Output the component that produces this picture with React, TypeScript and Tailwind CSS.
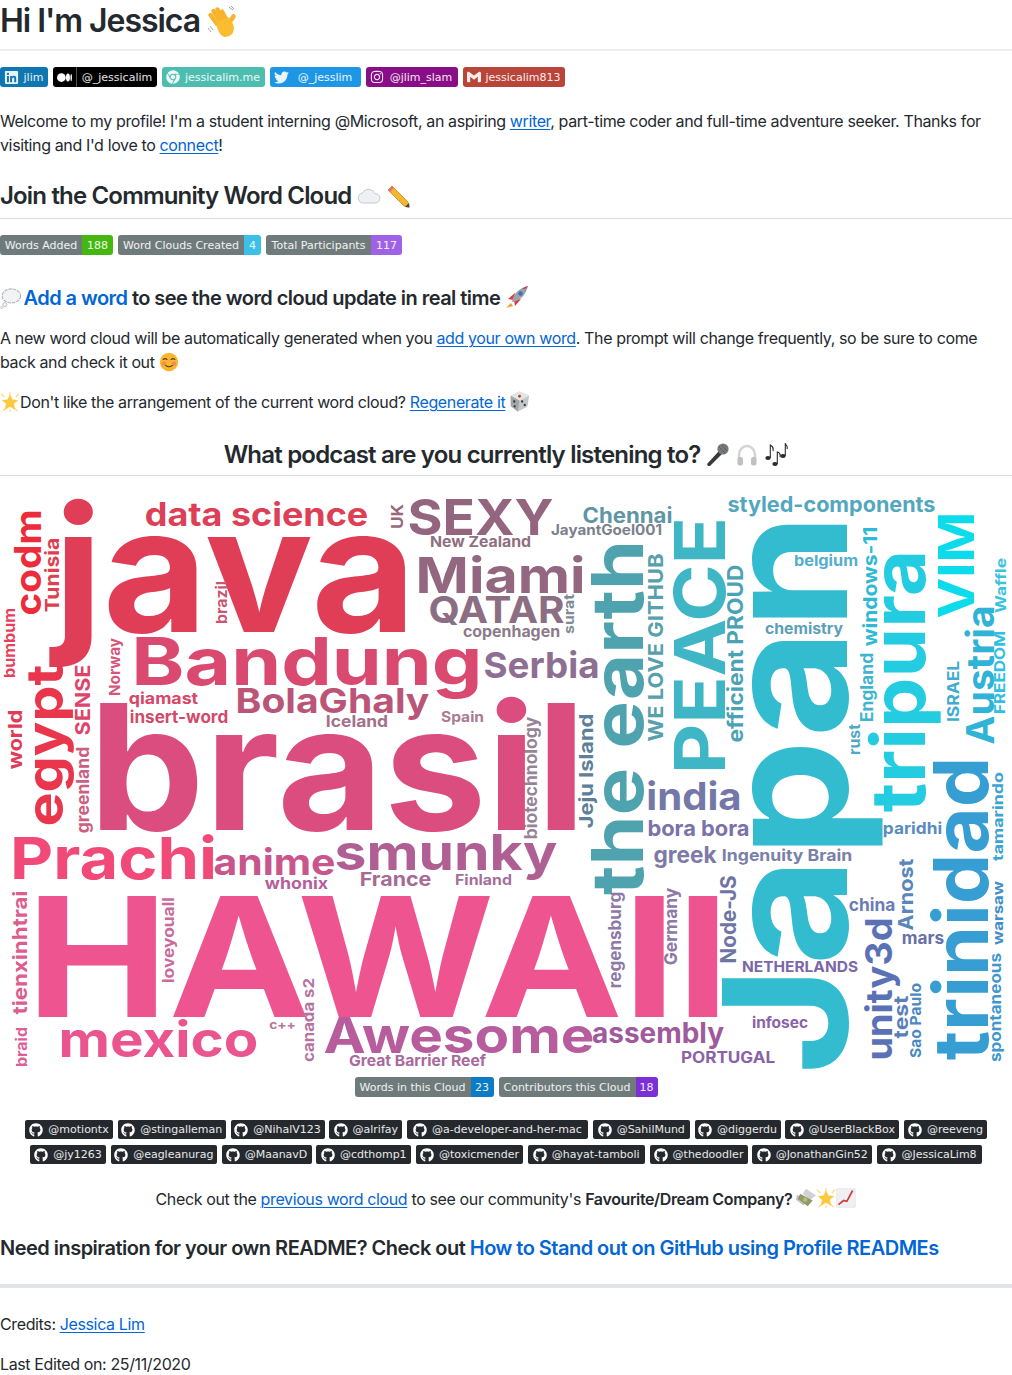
import type { ReactNode } from 'react';
import { FaChrome, FaGithub, FaInstagram, FaLinkedin, FaTwitter } from 'react-icons/fa';
import { SiGmail } from 'react-icons/si';

type Word = [string, number, number, number, number, string, boolean?];

// text, x, y (baseline), font size, length, colour, vertical
const words: Word[] = [
  ['java', 66, 632, 174, 338, '#e03d57'],
  ['data science', 147, 526, 32, 219, '#dd3f57'],
  ['UK', 403, 528, 15.5, 23, '#9a6878', true],
  ['SEXY', 411, 535, 50, 139, '#93657e'],
  ['New Zealand', 431, 547, 15, 99, '#8f6f80'],
  ['Miami', 419, 593, 50, 163, '#93677f'],
  ['QATAR', 431, 623, 37, 131, '#8c6e83'],
  ['copenhagen', 464, 637, 15.5, 95, '#8c7a8a'],
  ['surat', 574, 633, 13.5, 38, '#7e8b96', true],
  ['Chennai', 584, 523, 21, 87, '#5f96a5'],
  ['JayantGoel001', 552, 535, 14, 109, '#7b7f8d'],
  ['styled-components', 729, 512, 21, 205, '#52a7bf'],
  ['VIM', 974, 615, 50, 100, '#0cdbec', true],
  ['PEACE', 725, 769, 70, 247, '#3fb6c5', true],
  ['WE LOVE GITHUB', 663, 740, 20.5, 185, '#58a0ac', true],
  ['efficient PROUD', 743, 741, 21, 175, '#4aa3b5', true],
  ['the earth', 643, 890, 71, 345, '#4ea3ae', true],
  ['Japan', 847, 1063, 172, 538, '#33bccf', true],
  ['belgium', 795, 566, 15, 62, '#55aecc'],
  ['chemistry', 766, 634, 15, 76, '#5b9fb8'],
  ['windows-11', 877, 645, 19, 117, '#30b9d6', true],
  ['tripura', 925, 807, 75, 252, '#23cce0', true],
  ['Austria', 994, 742, 38, 134, '#2fb3d6', true],
  ['FREEDOM', 1005, 713, 15, 81, '#33c0e0', true],
  ['Waffle', 1006, 612, 14.5, 53, '#3cc3dc', true],
  ['ISRAEL', 959, 721, 16, 59, '#40acd0', true],
  ['England', 873, 721, 17, 67, '#3eb5cf', true],
  ['rust', 860, 754, 15, 29, '#4fa9c6', true],
  ['Jeju Island', 593, 827, 19, 112, '#5e7f9a', true],
  ['biotechnology', 537, 838, 17, 120, '#968396', true],
  ['Serbia', 486, 678, 36, 111, '#8e6f93'],
  ['Bandung', 136, 685, 66, 342, '#da4a70'],
  ['brasil', 101, 830, 174, 473, '#db4d7e'],
  ['BolaGhaly', 238, 713, 34, 189, '#ba5578'],
  ['Iceland', 327, 727, 16, 60, '#a3708a'],
  ['Spain', 442, 722, 14.5, 41, '#ab7a92'],
  ['qiamast', 130, 704, 16, 67, '#d5486a'],
  ['insert-word', 131, 723, 17, 96, '#d24a6a'],
  ['brazil', 227, 623, 15, 41, '#cc5470', true],
  ['codm', 41, 613, 37, 101, '#ec2c3a', true],
  ['Tunisia', 59, 611, 19, 72, '#df4050', true],
  ['bumbum', 15, 677, 15, 68, '#e8405a', true],
  ['Norway', 120, 695, 15, 56, '#d6557a', true],
  ['SENSE', 90, 734, 20, 68, '#de4369', true],
  ['egypt', 63, 823, 51, 155, '#e9364c', true],
  ['world', 22, 768, 19, 57, '#e03c58', true],
  ['greenland', 89, 832, 17, 84, '#cc5e80', true],
  ['Prachi', 14, 879, 58, 199, '#f24a78'],
  ['anime', 216, 875, 36, 117, '#c9558d'],
  ['smunky', 338, 870, 49, 216, '#b05f94'],
  ['whonix', 266, 889, 16, 61, '#b5609a'],
  ['France', 361, 886, 19, 69, '#a66a95'],
  ['Finland', 456, 885, 14.5, 55, '#a56f9c'],
  ['HAWAII', 38, 1017, 166, 680, '#ee5590'],
  ['tienxinhtrai', 27, 1013, 20, 121, '#dd5d8e', true],
  ['loveyouall', 174, 982, 15.5, 84, '#c96b9b', true],
  ['braid', 27, 1066, 15, 38, '#de6097', true],
  ['mexico', 62, 1057, 49, 193, '#ea5590'],
  ['c++', 270, 1029, 12, 25, '#b675a0'],
  ['canada s2', 314, 1061, 15, 82, '#b573a2', true],
  ['Awesome', 327, 1053, 50, 264, '#b75c9c'],
  ['Great Barrier Reef', 350, 1066, 15, 135, '#a96a9d'],
  ['assembly', 594, 1043, 28, 128, '#a05a9c'],
  ['PORTUGAL', 682, 1063, 15.5, 92, '#8a62a8'],
  ['infosec', 753, 1028, 15, 54, '#8a62a8'],
  ['NETHERLANDS', 743, 972, 15, 114, '#7a68a8'],
  ['Node-JS', 736, 962, 21, 85, '#6e75a5', true],
  ['Germany', 677, 964, 18, 75, '#8e78a8', true],
  ['regensburg', 621, 987, 17, 94, '#8e78a8', true],
  ['india', 649, 810, 38, 90, '#7478a8'],
  ['bora bora', 649, 836, 22, 99, '#7a72a8'],
  ['greek', 655, 863, 23, 60, '#7d7aa8'],
  ['Ingenuity Brain', 723, 861, 16, 128, '#7b80a8'],
  ['paridhi', 884, 834, 16, 57, '#5a8cc0'],
  ['tamarindo', 1003, 860, 14, 87, '#3ba4d3', true],
  ['trinidad', 988, 1055, 76, 293, '#379ed4', true],
  ['warsaw', 1003, 944, 14.5, 62, '#3f8ec8', true],
  ['spontaneous', 1001, 1061, 15, 107, '#3f97d0', true],
  ['china', 850, 911, 18, 44, '#6b7cb5'],
  ['Arnost', 913, 929, 20, 69, '#5a86bb', true],
  ['mars', 903, 944, 17, 40, '#6670aa'],
  ['unity3d', 892, 1058, 37, 138, '#5a72b5', true],
  ['test', 908, 1037, 20, 40, '#5d7fb8', true],
  ['Sao Paulo', 921, 1057, 15, 73, '#4b87c0', true],
];

const contributorRows: [string, number][][] = [
  [['motiontx', 88], ['stingalleman', 108], ['NihalV123', 94], ['alrifay', 73], ['a-developer-and-her-mac', 181], ['SahilMund', 97], ['diggerdu', 86], ['UserBlackBox', 114], ['reeveng', 83]],
  [['jy1263', 76], ['eagleanurag', 106], ['MaanavD', 90], ['cdthomp1', 95], ['toxicmender', 107], ['hayat-tamboli', 117], ['thedoodler', 98], ['JonathanGin52', 120], ['JessicaLim8', 105]],
];

const badgeText = "font-['DejaVu_Sans',sans-serif] text-[11px] leading-none whitespace-nowrap text-white/90";

function Shield({ w, bg, icon, label }: { w: string; bg: string; icon: ReactNode; label: string }) {
  return (
    <span className={`flex h-5 items-center gap-1 rounded-[3px] px-1 ${w} ${bg} ${badgeText} tracking-normal`}>
      {icon}
      <span className="flex-1 text-center">{label}</span>
    </span>
  );
}

function Counter({ label, value, labelW, valueW, color }: { label: string; value: string; labelW: string; valueW: string; color: string }) {
  return (
    <span className={`flex h-5 overflow-hidden rounded-[3px] ${badgeText} tracking-normal`}>
      <span className={`flex items-center justify-center bg-[#6f7b7b] ${labelW}`}>{label}</span>
      <span className={`flex items-center justify-center ${valueW} ${color}`}>{value}</span>
    </span>
  );
}

function Link({ children }: { children: ReactNode }) {
  return <a className="text-[#0366d6] underline underline-offset-2 decoration-1">{children}</a>;
}

const emojiClass = 'inline-block';

function Hand() {
  return (
    <svg viewBox="0 0 32 32" className={`${emojiClass} h-8 w-8 align-[-6px]`}>
      <g stroke="#f7b32b" strokeLinecap="round" fill="none">
        <path d="M10 18 L3.5 9" strokeWidth="4.4" />
        <path d="M13 15 L6.5 5" strokeWidth="4.4" />
        <path d="M16 13 L10.5 3.5" strokeWidth="4.4" />
        <path d="M19 13 L15 5.5" strokeWidth="4.2" />
        <path d="M22 17 L26.5 10.5" strokeWidth="4.6" />
      </g>
      <path d="M9 16 L21 11 Q27 17 27 23 Q26 31 17 31 Q11 29 9 16Z" fill="#f9bd2f" />
      <path d="M1 22 l3 4 M3 20 l3 4" stroke="#8a8a8a" strokeWidth="0.8" />
      <path d="M22 1 l4 3 M24 0 l3 3" stroke="#8a8a8a" strokeWidth="0.8" />
    </svg>
  );
}

function Cloud({ className }: { className: string }) {
  return (
    <svg viewBox="0 0 24 24" className={`${emojiClass} ${className}`}>
      <path d="M6 19a5 5 0 0 1-.6-9.9A7 7 0 0 1 18 9.6 4.7 4.7 0 0 1 18.5 19Z" fill="#eef0f3" stroke="#c4c8cd" strokeWidth="1" />
    </svg>
  );
}

function Pencil() {
  return (
    <svg viewBox="0 0 24 24" className={`${emojiClass} h-6 w-6 align-[-4px]`}>
      <path d="M6 2 L22 18 L23 23 L18 22 L2 6Z" fill="#f5b52e" stroke="#c98a1c" strokeWidth="0.8" />
      <path d="M2 6 L6 2 L8 4 L4 8Z" fill="#e8727c" />
      <path d="M19 23 L23 19 L23.5 23.5Z" fill="#444" />
    </svg>
  );
}

function Thought() {
  return (
    <svg viewBox="0 0 24 24" className={`${emojiClass} -mr-[2px] h-[21px] w-[21px] align-[-4px]`}>
      <ellipse cx="13" cy="9" rx="10.5" ry="8" fill="#f1f3f5" stroke="#aeb3b8" strokeWidth="1.2" strokeDasharray="4 1" />
      <circle cx="5.5" cy="19" r="2.4" fill="#f1f3f5" stroke="#aeb3b8" strokeWidth="0.9" />
      <circle cx="2" cy="22.5" r="1.3" fill="#f1f3f5" stroke="#aeb3b8" strokeWidth="0.7" />
    </svg>
  );
}

function Rocket() {
  return (
    <svg viewBox="0 0 24 24" className={`${emojiClass} h-6 w-6 align-[-4px]`}>
      <path d="M6 18 L1 23 L8 21Z" fill="#f39c2d" />
      <path d="M3 14 L10 8 L9 15Z M10 21 L16 14 L9 15Z" fill="#d83b3b" />
      <path d="M7 17 C8 8 15 3 23 1 C21 9 16 16 7 17Z" fill="#9aa3ad" />
      <path d="M23 1 C21.5 3 20 5 17.5 3.5 C19.5 2 21.5 1.3 23 1Z" fill="#d83b3b" />
      <circle cx="15.5" cy="8.5" r="2.2" fill="#3f6fb5" />
    </svg>
  );
}

function Smile() {
  return (
    <svg viewBox="0 0 24 24" className={`${emojiClass} h-5 w-5 align-[-4px]`}>
      <circle cx="12" cy="12" r="11" fill="#f8b62f" />
      <circle cx="6" cy="14" r="2.6" fill="#f08c5a" />
      <circle cx="18" cy="14" r="2.6" fill="#f08c5a" />
      <path d="M5 9q2.5-2 4.5 0M14.5 9q2.5-2 4.5 0M8 16q4 3.5 8 0" stroke="#5b3a1a" strokeWidth="1.3" fill="none" strokeLinecap="round" />
    </svg>
  );
}

function Star({ className }: { className: string }) {
  return (
    <svg viewBox="0 0 24 24" className={`${emojiClass} ${className}`}>
      <path d="M12 2.5 L15 9 L22 9.5 L16.8 14.2 L18.5 21.5 L12 17.8 L5.5 21.5 L7.2 14.2 L2 9.5 L9 9Z" fill="#fcc93f" />
      <path d="M12 0v3M1 2l4 4M23 2l-4 4M3 23l3-3M21 23l-3-3M12 21v3" stroke="#fbd970" strokeWidth="1.4" />
    </svg>
  );
}

function Die() {
  return (
    <svg viewBox="0 0 24 24" className={`${emojiClass} h-[21px] w-[21px] align-[-4px]`}>
      <path d="M12 0.5 L23 5.5 L21 18 L10 23.5 L2 17 L2 5.5Z" fill="#c4c7ca" />
      <path d="M12 0.5 L23 5.5 L12 11 L2 5.5Z" fill="#e4e5e7" />
      <path d="M12 11 L10 23.5 L2 17 L2 5.5Z" fill="#a2a5a9" />
      <circle cx="12" cy="6" r="1.6" fill="#c0392b" />
      <circle cx="6" cy="12" r="1.3" fill="#333" />
      <circle cx="6.5" cy="17.5" r="1.3" fill="#333" />
      <circle cx="15" cy="12" r="1.3" fill="#333" />
      <circle cx="18" cy="16" r="1.3" fill="#333" />
    </svg>
  );
}

function Mic() {
  return (
    <svg viewBox="0 0 24 24" className={`${emojiClass} h-6 w-6 align-[-4px]`}>
      <path d="M2 23 L1 21 L13 8 L16 11 L4 23Z" fill="#3a3a3a" />
      <circle cx="17" cy="6" r="5.6" fill="#77797c" />
      <path d="M13 4 L19 10 M16 2 L21 8" stroke="#55575a" strokeWidth="0.8" />
    </svg>
  );
}

function Headphones() {
  return (
    <svg viewBox="0 0 24 24" className={`${emojiClass} h-6 w-6 align-[-4px]`}>
      <path d="M4 17 V12 A8 9 0 0 1 20 12 V17" fill="none" stroke="#d2d4d6" strokeWidth="2.4" />
      <rect x="2.5" y="14" width="5.5" height="8.5" rx="2.2" fill="#bfc1c4" />
      <rect x="16" y="14" width="5.5" height="8.5" rx="2.2" fill="#bfc1c4" />
    </svg>
  );
}

function Notes() {
  return (
    <svg viewBox="0 0 24 24" className={`${emojiClass} h-6 w-6 align-[-4px]`}>
      <g fill="#2b2b2b">
        <ellipse cx="4" cy="15" rx="2.7" ry="2" />
        <ellipse cx="11" cy="21" rx="2.7" ry="2" />
        <ellipse cx="19" cy="13" rx="2.7" ry="2" />
      </g>
      <path d="M6.3 15 V2 Q10 4 9 8 M13.3 21 V9 Q17 10 16 14 M21.3 13 V0.5 Q24 4 23 6" stroke="#2b2b2b" strokeWidth="1.1" fill="none" />
    </svg>
  );
}

function Money() {
  return (
    <svg viewBox="0 0 24 24" className={`${emojiClass} h-5 w-5 align-[-3px]`}>
      <path d="M1 8 L14 14 L9 21 L0 14Z" fill="#c0c3c7" />
      <path d="M12 1 L24 9 L17 14 L8 7Z" fill="#cfd1d4" />
      <path d="M5 7 L20 15 L14 22 L2 13Z" fill="#8e9a6a" />
      <circle cx="11" cy="14" r="2.6" fill="#c8b765" />
    </svg>
  );
}

function Chart() {
  return (
    <svg viewBox="0 0 24 24" className={`${emojiClass} h-5 w-5 align-[-3px]`}>
      <rect x="1" y="1" width="22" height="22" fill="#eef0f2" stroke="#d4d6d8" strokeWidth="0.6" />
      <path d="M3 20 L9 15 L13 16 L20 3" fill="none" stroke="#d43838" strokeWidth="2" />
    </svg>
  );
}

function WordCloud() {
  return (
    <svg viewBox="0 484 1012 590" className="h-[590px] w-[1012px] font-['Inter',sans-serif] font-bold tracking-normal">
      {words.map(([text, x, y, size, len, color, vertical]) => {
        // glyphs carry side bearings, so widen the run to make the ink hit the measured edges
        const bearing = size * 0.07;
        const tx = vertical ? x : x - bearing;
        const ty = vertical ? y + bearing : y;
        return (
          <text
            key={text}
            x={tx}
            y={ty}
            fontSize={size}
            fill={color}
            textLength={len + bearing * 2}
            lengthAdjust="spacingAndGlyphs"
            transform={vertical ? `rotate(-90 ${tx} ${ty})` : undefined}
          >
            {text}
          </text>
        );
      })}
    </svg>
  );
}

export default function App() {
  return (
    <div className="h-[1375px] w-[1012px] overflow-hidden bg-white font-['Inter','Noto_Sans',sans-serif] text-base leading-6 tracking-[-0.37px] text-[#24292e]">
      <h1 className="h-[51px] border-b-2 border-[#eaecef] text-[32px] font-semibold leading-[42px] tracking-[-1.05px]">
        Hi I'm Jessica <Hand />
      </h1>

      <div className="mt-4 flex gap-[5px]">
        <Shield w="w-12" bg="bg-[#0e76b0]" icon={<FaLinkedin className="h-[15px] w-[15px] shrink-0" />} label="jlim" />
        <span className={`flex h-5 w-[104px] items-center rounded-[3px] bg-black ${badgeText} tracking-normal`}>
          <span className="flex h-full w-[24px] shrink-0 items-center justify-center border-r border-white/30">
            <svg viewBox="0 0 24 14" className="h-[9px] w-[15px] fill-white">
              <ellipse cx="7" cy="7" rx="7" ry="7" />
              <ellipse cx="17.5" cy="7" rx="3.2" ry="6.5" />
              <ellipse cx="22.7" cy="7" rx="1.2" ry="5.8" />
            </svg>
          </span>
          <span className="flex-1 text-center">@_jessicalim</span>
        </span>
        <Shield w="w-[103px]" bg="bg-[#4dbdb0]" icon={<FaChrome className="h-[14px] w-[14px] shrink-0" />} label="jessicalim.me" />
        <Shield w="w-[91px]" bg="bg-[#1e96e6]" icon={<FaTwitter className="h-[15px] w-[15px] shrink-0" />} label="@_jesslim" />
        <Shield w="w-[92px]" bg="bg-[#890d87]" icon={<FaInstagram className="h-[14px] w-[14px] shrink-0" />} label="@jlim_slam" />
        <Shield w="w-[102px]" bg="bg-[#b8443a]" icon={<SiGmail className="h-[14px] w-[14px] shrink-0" />} label="jessicalim813" />
      </div>

      <p className="mt-[22px]">
        Welcome to my profile! I'm a student interning @Microsoft, an aspiring <Link>writer</Link>, part-time coder and
        full-time adventure seeker. Thanks for visiting and I'd love to <Link>connect</Link>!
      </p>

      <h2 className="mt-6 h-[38px] border-b border-[#d9dde1] text-2xl font-semibold leading-[30px] tracking-[-0.83px]">
        Join the Community Word Cloud <Cloud className="h-6 w-6 align-[-4px]" /> <Pencil />
      </h2>

      <div className="mt-4 flex gap-[5px]">
        <Counter label="Words Added" value="188" labelW="w-[82px]" valueW="w-[31px]" color="bg-[#44b811]" />
        <Counter label="Word Clouds Created" value="4" labelW="w-[126px]" valueW="w-[17px]" color="bg-[#3cc0e8]" />
        <Counter label="Total Participants" value="117" labelW="w-[105px]" valueW="w-[31px]" color="bg-[#9f62e6]" />
      </div>

      <h3 className="mt-[30px] h-[25px] text-xl font-semibold leading-[25px] tracking-[-0.55px]">
        <Thought /> <a className="text-[#0366d6]">Add a word</a> to see the word cloud update in real time <Rocket />
      </h3>

      <p className="mt-4">
        A new word cloud will be automatically generated when you <Link>add your own word</Link>. The prompt will change
        frequently, so be sure to come back and check it out <Smile />
      </p>

      <p className="mt-4 h-6">
        <Star className="h-5 w-5 align-[-4px]" />
        Don't like the arrangement of the current word cloud? <Link>Regenerate it</Link> <Die />
      </p>

      <h2 className="mt-[26px] h-[36px] border-b border-[#d9dde1] text-center text-2xl font-semibold leading-[30px] tracking-[-0.8px]">
        What podcast are you currently listening to? <Mic /> <Headphones /> <Notes />
      </h2>

      <div className="mt-2">
        <WordCloud />
      </div>

      <div className="mt-[3px] flex justify-center gap-[5px]">
        <Counter label="Words in this Cloud" value="23" labelW="w-[116px]" valueW="w-[23px]" color="bg-[#0a7bc4]" />
        <Counter label="Contributors this Cloud" value="18" labelW="w-[137px]" valueW="w-[22px]" color="bg-[#7c2fd6]" />
      </div>

      <div className="mt-[23px] flex flex-col gap-[6px]">
        {contributorRows.map((row, i) => (
          <div key={i} className="flex justify-center gap-[4.75px]">
            {row.map(([name, width]) => (
              <span
                key={name}
                className={`flex h-[19px] items-center justify-center gap-[5px] rounded-[2px] bg-[#25292e] ${badgeText} tracking-normal text-white/75`}
                style={{ width }}
              >
                <FaGithub className="h-[14px] w-[14px] shrink-0 text-white" />
                @{name}
              </span>
            ))}
          </div>
        ))}
      </div>

      <p className="mt-[23px] h-6 text-center">
        Check out the <Link>previous word cloud</Link> to see our community's{' '}
        <strong className="font-semibold">Favourite/Dream Company?</strong> <Money /><Star className="h-5 w-5 align-[-3px]" /><Chart />
      </p>

      <h3 className="mt-[25px] text-xl font-semibold leading-[25px] tracking-[-0.52px]">
        Need inspiration for your own README? Check out{' '}
        <a className="text-[#0366d6]">How to Stand out on GitHub using Profile READMEs</a>
      </h3>

      <hr className="mt-[23px] h-1 border-0 bg-[#e1e4e8]" />

      <p className="mt-6">
        Credits: <Link>Jessica Lim</Link>
      </p>
      <p className="mt-4">Last Edited on: 25/11/2020</p>
    </div>
  );
}
